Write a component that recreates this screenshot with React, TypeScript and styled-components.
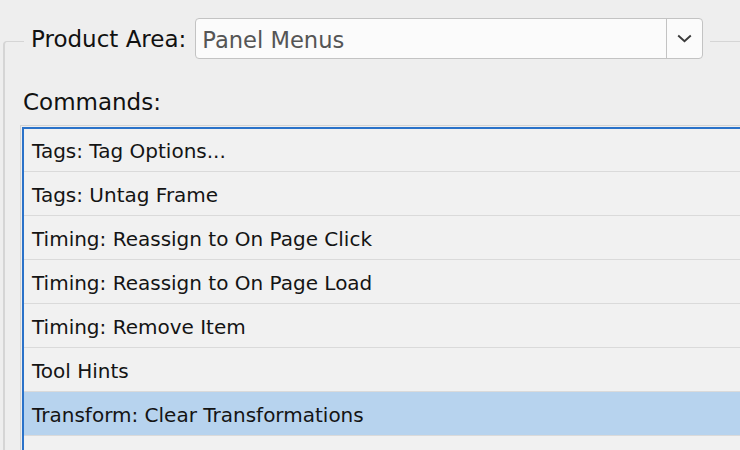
import React from "react";
import styled, { createGlobalStyle } from "styled-components";

const Global = createGlobalStyle`
  html, body { margin: 0; padding: 0; background: #eeeeee; }
  body { font-family: "DejaVu Sans", "Liberation Sans", sans-serif; color: #141414; }
`;

const Screen = styled.div`
  width: 740px;
  height: 450px;
  overflow: hidden;
  background: #eeeeee;
  padding: 41px 0 0 3px;
  box-sizing: border-box;
`;

const Frame = styled.div`
  width: 790px;
  height: 520px;
  border-top: 1px solid #d5d5d5;
  border-left: 2px solid #d5d5d5;
  border-top-left-radius: 4px;
  display: flex;
  flex-direction: column;
`;

const LegendRow = styled.div`
  align-self: flex-start;
  margin: -24px 0 0 19px;
  padding: 0 7px;
  background: #eeeeee;
  display: flex;
  align-items: center;
  gap: 9px;
`;

const Label = styled.span`
  font-size: 23px;
  line-height: 27px;
  color: #111;
  white-space: nowrap;
  padding-top: 2px;
`;

const Select = styled.div`
  width: 508px;
  height: 41px;
  box-sizing: border-box;
  border: 1px solid #c3c3c3;
  border-radius: 4px;
  background: #fbfbfb;
  display: flex;
  align-items: stretch;
`;

const SelectValue = styled.div`
  flex: 1;
  display: flex;
  align-items: center;
  padding: 2px 0 0 6px;
  font-size: 22.6px;
  color: #555555;
`;

const SelectButton = styled.div`
  width: 35px;
  border-left: 1px solid #c3c3c3;
  display: flex;
  align-items: center;
  justify-content: center;
`;

const SectionLabel = styled(Label)`
  display: block;
  margin: 28px 0 0 18px;
`;

const ListOuter = styled.div`
  margin: 9px 0 0 15px;
  border-top: 1px solid #d3d3d3;
  border-left: 1px solid #d3d3d3;
  padding: 1px 0 0 1px;
  flex: 1;
`;

const List = styled.div`
  height: 100%;
  border-top: 2px solid #2a72c9;
  border-left: 2px solid #2a72c9;
  background: #f1f1f1;
`;

const Row = styled.div<{ $selected?: boolean }>`
  height: 44px;
  box-sizing: border-box;
  border-bottom: 1px solid #dadada;
  padding: 2px 0 0 8px;
  display: flex;
  align-items: center;
  font-size: 20px;
  color: #141414;
  white-space: nowrap;
  background: ${(p) => (p.$selected ? "#b7d3ee" : "transparent")};
  &:first-child {
    height: 43px;
  }
`;

const items = [
  "Tags: Tag Options...",
  "Tags: Untag Frame",
  "Timing: Reassign to On Page Click",
  "Timing: Reassign to On Page Load",
  "Timing: Remove Item",
  "Tool Hints",
  "Transform: Clear Transformations",
  "",
];

export default function App() {
  return (
    <>
      <Global />
      <Screen>
        <Frame>
          <LegendRow>
            <Label>Product Area:</Label>
            <Select>
              <SelectValue>Panel Menus</SelectValue>
              <SelectButton>
                <svg width="15" height="9" viewBox="0 0 15 9">
                  <path d="M1.2 1.5 L7.5 7.2 L13.8 1.5" fill="none" stroke="#3a3a3a" strokeWidth="1.9" />
                </svg>
              </SelectButton>
            </Select>
          </LegendRow>
          <SectionLabel>Commands:</SectionLabel>
          <ListOuter>
            <List>
              {items.map((t, i) => (
                <Row key={i} $selected={t === "Transform: Clear Transformations"}>
                  {t}
                </Row>
              ))}
            </List>
          </ListOuter>
        </Frame>
      </Screen>
    </>
  );
}
